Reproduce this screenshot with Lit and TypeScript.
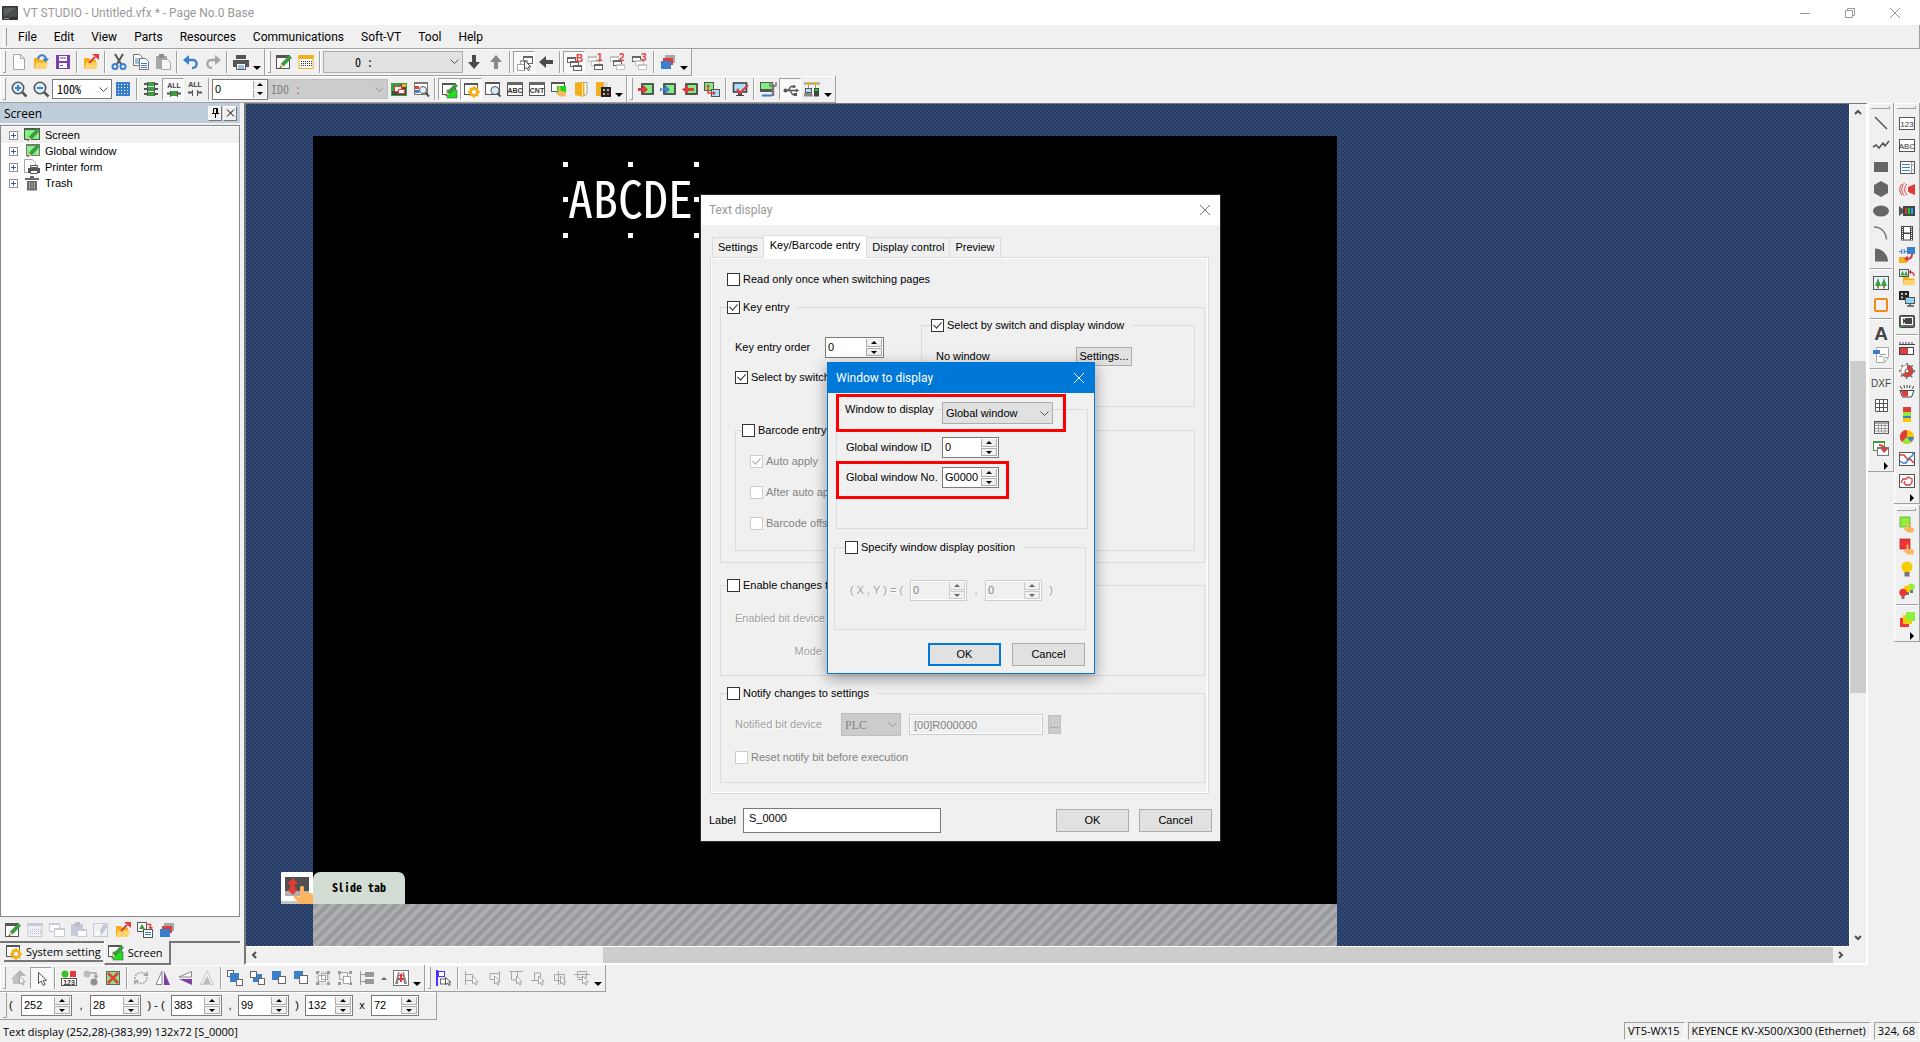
import { LitElement, html, svg, css, TemplateResult, SVGTemplateResult } from "lit";
import { customElement, property } from "lit/decorators.js";
import { classMap } from "lit/directives/class-map.js";
import { ifDefined } from "lit/directives/if-defined.js";

const GREEN = "#3f9b3f";
const RED = "#e03c3c";
const BLUE = "#3a7fcb";
const DARK = "#555";
const GREY = "#a6a6a6";
const YELLOW = "#f2b01e";

const pencil = svg`<path d="M13.200 1.200l2.800 2.600-8.400 8.600-2.800-2.700z" fill="${GREEN}"/><path d="M4.800 9.700l2.800 2.700-3.900 1.400z" fill="#e9c08c"/><path d="M4.200 12.200l1.200 1.100-2 .9z" fill="#222"/>`;
const hand = svg`<path d="M7.5 6.5c0-1.4 2-1.4 2 0v3.2l4 .8c1.3.3 1.5 1 1.4 2l-.5 3H8.6l-3.4-3c-.8-1 .3-1.900 1.200-1.400l1.100.6z" fill="#fdb562"/>`;
const folder = svg`<path d="M1 4h5l1.500 2H13v9H1z" fill="${YELLOW}"/><path d="M1 15l2.400-6.600H15L13 15z" fill="#ffd36b"/>`;
const cursor = svg`<path d="M7.500 5.500v9l2.200-2 1.500 3 1.500-.8-1.500-2.800h2.800z" fill="#fff" stroke="${DARK}"/>`;
const greyCursor = svg`<path d="M8.500 6v8l1.900-1.700 1.300 2.800 1.300-.7-1.300-2.500h2.500z" fill="#fff" stroke="${GREY}"/>`;
const windowBox = (x: number, y: number, w: number, h: number, c: string) =>
  svg`<rect x="${x + 0.5}" y="${y + 0.5}" width="${w - 1}" height="${h - 1}" fill="#fff" stroke="${c}"/><rect x="${x}" y="${y}" width="${w}" height="2" fill="${c}"/>`;
const stack = (n: string, a: string, b: string, c: string) =>
  svg`${windowBox(0, 2, 9, 6, a)}${windowBox(3, 6, 9, 6, b)}${windowBox(6, 10, 9, 6, c)}<text x="9" y="7" font-family="Liberation Sans" font-size="10" font-weight="700" fill="${RED}">${n}</text>`;
const framed = (t: string) =>
  svg`<rect x=".5" y="1.500" width="15" height="13" fill="#fff" stroke="${DARK}"/><rect x="0" y="1" width="16" height="3" fill="#666"/><text x="8" y="12" text-anchor="middle" class="it" font-size="7" font-weight="700" fill="#333">${t}</text>`;
const bordered = (t: string) =>
  svg`<rect x=".5" y="2.500" width="15" height="12" fill="#fff" stroke="${DARK}"/><text x="8" y="11.500" text-anchor="middle" class="it" font-size="8" fill="#333">${t}</text>`;
const monitor = svg`<rect x="3" y="2" width="13" height="12" rx="1" fill="${DARK}"/><rect x="5" y="4" width="9" height="8" fill="#7df07d"/>`;
const nodes = (c: string) =>
  svg`<g fill="${c}"><rect x="1" y="1" width="3" height="3"/><rect x="12" y="1" width="3" height="3"/><rect x="1" y="12" width="3" height="3"/><rect x="12" y="12" width="3" height="3"/></g>`;

const ICONS: Record<string, SVGTemplateResult> = {
  app: svg`<rect y="1" width="16" height="14" rx="1" fill="#333"/><rect x="1.500" y="2.500" width="13" height="9" fill="#5c605e"/><path d="M1.500 11.500l13-9v9z" fill="#4a4e4c"/><rect x="2" y="13" width="5" height="1" fill="#999"/>`,
  new: svg`<path d="M2.500.5h7l4 4v11h-11z" fill="#fff" stroke="${GREY}"/><path d="M9.500.5v4h4" fill="none" stroke="${GREY}"/>`,
  open: svg`${folder}<path d="M5 5c1-5 7-5 8 0" fill="none" stroke="${BLUE}" stroke-width="2"/><path d="M9.500 4.500h6.500l-3.200 4z" fill="${BLUE}"/>`,
  save: svg`<path d="M1 1h14v14H1z" fill="#7d3fa8"/><path d="M4 2h8v5H4zM4 9h8v5H4z" fill="#fff"/><path d="M5 4h6M5 11.500h3" stroke="#7d3fa8"/>`,
  export: svg`${folder}<path d="M6 9l6-6" stroke="${RED}" stroke-width="2"/><path d="M9 0h7v6z" fill="${RED}"/>`,
  cut: svg`<path d="M4 0l6 10M12 0L6 10" stroke="${DARK}" stroke-width="2"/><circle cx="4" cy="12.500" r="2.500" fill="none" stroke="${BLUE}" stroke-width="2"/><circle cx="12" cy="12.500" r="2.500" fill="none" stroke="${BLUE}" stroke-width="2"/>`,
  copy: svg`<path d="M.5.5h6l3 3v8h-9z" fill="#fff" stroke="#777"/><path d="M2 5h5M2 7h5M2 9h5" stroke="${BLUE}"/><path d="M6.500 4.500h6l3 3v8h-9z" fill="#fff" stroke="#777"/><path d="M8 9.500h6M8 11.500h6M8 13.500h6" stroke="${BLUE}"/>`,
  paste: svg`<path d="M1 2h11v13H1z" fill="${GREY}"/><rect x="4" width="5" height="4" fill="#8a8a8a"/><path d="M6.500 5.500h6l3 3v7h-9z" fill="#f6f6f6" stroke="${GREY}"/>`,
  undo: svg`<path d="M3 6h7c5 0 5 8-1 8" fill="none" stroke="${BLUE}" stroke-width="2.400"/><path d="M6 1v10L0 6z" fill="${BLUE}"/>`,
  redo: svg`<path d="M13 6H6c-5 0-5 8 1 8" fill="none" stroke="${GREY}" stroke-width="2.400"/><path d="M10 1v10l6-5z" fill="${GREY}"/>`,
  print: svg`<path d="M3 1h10v4H3z" fill="${DARK}"/><path d="M0 6h16v7H0z" fill="${DARK}"/><path d="M3.500 9.500h9v6h-9z" fill="#fff" stroke="${DARK}"/><path d="M5 12h6M5 14h6" stroke="${BLUE}"/>`,
  edit: svg`<rect x=".5" y="1.500" width="13" height="13" fill="#fff" stroke="${DARK}"/><rect y="1" width="14" height="3" fill="${DARK}"/>${pencil}`,
  calendar: svg`<rect x="1" y="1.500" width="14" height="13" fill="#fff" stroke="${YELLOW}"/><rect x=".5" y="1" width="15" height="4" fill="${YELLOW}"/><path d="M3 7.500h11M3 9.500h11M3 11.500h11" stroke="#333" stroke-dasharray="1 1"/>`,
  down: svg`<path d="M6 1h4v7h4l-6 7-6-7h4z" fill="#4a4a4a"/>`,
  up: svg`<path d="M6 15h4V8h4L8 1 2 8h4z" fill="#888"/>`,
  left: svg`<path d="M15 6v4H8v4L1 8l7-6v4z" fill="#4a4a4a"/>`,
  pickWindow: svg`${windowBox(6, 1, 10, 8, "#666")}${windowBox(3, 5, 8, 7, GREY)}<rect x="0.500" y="9.500" width="7" height="6" fill="#fff" stroke="${GREY}"/>${cursor}`,
  baseB: stack("B", "#666", "#666", "#666"),
  win1: stack("1", "#c4c4c4", "#c4c4c4", "#666"),
  win2: stack("2", "#c4c4c4", "#666", "#c4c4c4"),
  win3: stack("3", "#666", "#c4c4c4", "#c4c4c4"),
  layers: svg`<path d="M5 1h10v8H5z" fill="${GREY}"/><path d="M3 4h10v7H3z" fill="${RED}"/><path d="M1 7h10v8H1z" fill="${BLUE}"/>`,
  zoomIn: svg`<circle cx="7" cy="7" r="5.700" fill="#dff1ff" stroke="${DARK}" stroke-width="1.600"/><path d="M11 11l4.500 4.500" stroke="${DARK}" stroke-width="2.500"/><path d="M4 7h6M7 4v6" stroke="${BLUE}" stroke-width="2"/>`,
  zoomOut: svg`<circle cx="7" cy="7" r="5.700" fill="#dff1ff" stroke="${DARK}" stroke-width="1.600"/><path d="M11 11l4.500 4.500" stroke="${DARK}" stroke-width="2.500"/><path d="M4 7h6" stroke="${BLUE}" stroke-width="2"/>`,
  grid: svg`<rect x="1" y="1" width="14" height="14" fill="${BLUE}"/><path d="M3 3.500h11M3 6.500h11M3 9.500h11M3 12.500h11" stroke="#fff" stroke-dasharray="1 2"/>`,
  devices: svg`<path d="M5 1h6v4H5zM5 6h6v4H5zM5 11h6v4H5z" fill="${GREEN}"/><path d="M1 3h3M12 3h3M1 8h3M12 8h3M1 13h3M12 13h3" stroke="${DARK}" stroke-width="2"/><path d="M4.500 1v14M11.500 1v14" stroke="${DARK}"/>`,
  allOn: svg`<text x="8" y="6" text-anchor="middle" font-family="Liberation Sans" font-size="7" font-weight="700" fill="#444">ALL</text><rect x="5" y="9" width="6" height="5" fill="${GREEN}"/><path d="M1 11.500h3M12 11.500h3" stroke="${DARK}" stroke-width="2"/><path d="M4.500 9v6M11.500 9v6" stroke="${DARK}"/>`,
  allOff: svg`<text x="8" y="6" text-anchor="middle" font-family="Liberation Sans" font-size="7" font-weight="700" fill="#444">ALL</text><path d="M1 11.500h4M11 11.500h4" stroke="${DARK}" stroke-width="2"/><path d="M5.500 9v6M10.500 9v6" stroke="${DARK}"/>`,
  windows: svg`<rect x=".5" y="2.500" width="15" height="12" fill="#444" stroke="${GREEN}"/><path d="M1 3h9v7H1z" fill="${GREEN}"/><rect x="3.500" y="5.500" width="7" height="5" fill="#fff" stroke="${RED}"/><rect x="7.500" y="8.500" width="6" height="4" fill="#fff" stroke="${RED}"/><path d="M11 3h4v3h-4z" fill="${YELLOW}"/>`,
  searchWin: svg`${windowBox(1, 1, 14, 13, "#777")}<rect x="2" y="5" width="4" height="3" fill="${RED}"/><rect x="2" y="9" width="4" height="3" fill="${BLUE}"/><circle cx="10" cy="9" r="3.500" fill="#e8f4ff" stroke="${DARK}"/><path d="M12.500 11.500L16 15.500" stroke="${DARK}" stroke-width="2"/>`,
  screenEdit: svg`${windowBox(0, 1, 14, 12, DARK)}<rect x="5" y="8" width="10" height="8" fill="#1fe01f" stroke="${DARK}" stroke-width=".6"/>${pencil}`,
  screenGear: svg`${windowBox(0, 1, 14, 12, DARK)}<circle cx="10" cy="10" r="3.600" fill="none" stroke="${YELLOW}" stroke-width="3"/><path d="M10 4v12M4 10h12M5.800 5.800l8.400 8.400M14.200 5.800l-8.400 8.400" stroke="${YELLOW}" stroke-width="1.600"/><circle cx="10" cy="10" r="2" fill="#fff"/>`,
  screenFind: svg`${windowBox(0, 1, 15, 13, DARK)}<circle cx="10" cy="9.500" r="4" fill="#d5ecfb" stroke="${DARK}"/><path d="M12.500 12.500l3 3" stroke="${DARK}" stroke-width="2"/>`,
  abcWin: framed("ABC"),
  cntWin: framed("CNT"),
  screenTouch: svg`${windowBox(0, 1, 14, 10, DARK)}<rect x="6" y="5" width="9" height="8" fill="#16d916"/>${hand}`,
  books: svg`<path d="M9.500 1.500H14v11.500l-3 2z" fill="#fff" stroke="#888" stroke-width=".8"/><path d="M2 1.500L9.500 1l2 1.500V14l-2 2L2 14z" fill="${YELLOW}"/><path d="M9.500 2v13" stroke="#fff3d0" stroke-width=".8"/>`,
  bookGrid: svg`<path d="M1 1h8v14H1z" fill="${YELLOW}"/><path d="M9 1h4v5H9z" fill="#ddd"/><rect x="6" y="6" width="10" height="10" fill="#222"/><path d="M8 8h2v2H8zM12 8h2v2h-2zM8 12h2v2H8z" fill="#bbb"/><path d="M12 12h2v2h-2z" fill="${RED}"/>`,
  toPanel: svg`${monitor}<path d="M0 7h5V4l5 4.500L5 13v-3H0z" fill="${RED}"/>`,
  toPanelBlue: svg`${monitor}<path d="M3 7h2V4l5 4.500L5 13v-3H3z" fill="${BLUE}"/><path d="M.5 7v3M2 7v3" stroke="${BLUE}"/>`,
  fromPanel: svg`${monitor}<path d="M12 7H6V4L0 8.500 6 13v-3h6z" fill="${RED}"/>`,
  compare: svg`<rect x=".5" y="1.500" width="9" height="8" fill="#7df07d" stroke="${DARK}"/><rect x="7.500" y="8.500" width="8" height="7" fill="#a9e0fb" stroke="${DARK}"/><path d="M4 5v7h6" fill="none" stroke="${RED}" stroke-width="1.500"/><path d="M2 6l2-3 2 3zM9 10l3 2-3 2.500z" fill="${RED}"/>`,
  verify: svg`<rect x="1.500" y="2" width="13" height="9" fill="#a9e0fb" stroke="#444" stroke-width="1.600"/><path d="M6 12h4v2h2v1H4v-1h2z" fill="#444"/><path d="M5 8l3 4 8-8" fill="none" stroke="${RED}" stroke-width="2.200"/>`,
  panelTool: svg`<rect x=".5" y="1.500" width="12" height="9" fill="#7df07d" stroke="${DARK}"/><path d="M0 8h13v3H0z" fill="${DARK}"/><path d="M13 3v12" stroke="#777" stroke-width="2.500"/><path d="M10 1v4h6V1" fill="none" stroke="#777" stroke-width="1.500"/><path d="M2 14.500h10" stroke="${BLUE}" stroke-width="2"/>`,
  usb: svg`<path d="M2 8.500h12M5 8.500l3-4h3M7 8.500l2.500 4H12" fill="none" stroke="${DARK}" stroke-width="1.300"/><circle cx="2.500" cy="8.500" r="2" fill="${DARK}"/><path d="M13 6.500l3 2-3 2z" fill="${DARK}"/><circle cx="11" cy="4.500" r="1.500" fill="${DARK}"/><rect x="11" y="11" width="3" height="3" fill="${DARK}"/>`,
  network: svg`<path d="M0 2.500h16" stroke="#999" stroke-width="2"/><path d="M4.500 3v5M11.500 3v4" stroke="#999"/><path d="M3 1h3v3H3zM10 1h3v3h-3z" fill="${YELLOW}"/><rect x="1.500" y="7.500" width="6" height="4" fill="#a9e0fb" stroke="${DARK}"/><path d="M0 12h8l1 3.500H0z" fill="#888"/><rect x="10" y="7" width="5" height="8.500" fill="#444"/><rect x="11" y="8" width="3" height="2" fill="#16d916"/>`,
  treeScreen: svg`<rect x=".5" y="1.500" width="15" height="11" fill="#7df07d" stroke="#555"/><rect y="1" width="16" height="2" fill="#555"/>${pencil}`,
  treeGlobal: svg`<rect x="2.500" y="1.500" width="13" height="11" fill="#8af28a" stroke="#777"/><rect x="2" y="1" width="14" height="2" fill="#777"/>${pencil}`,
  treePrinter: svg`<path d="M.5.5h8l3 3v10h-11z" fill="#fff" stroke="${GREY}"/><path d="M4 9h12v5H4z" fill="${DARK}"/><path d="M6.500 6.500h7v2h-7zM6.500 11.500h7v3h-7z" fill="#fff" stroke="${DARK}"/>`,
  trash: svg`<path d="M6 1h4v2h5v2H1V3h5z" fill="#6a6a6a"/><path d="M3 6h10v9.500H3z" fill="#6a6a6a"/><path d="M5.500 7v7M8 7v7M10.500 7v7" stroke="#a5a5a5"/>`,
  calGrey: svg`<rect x="1" y="1.500" width="14" height="13" fill="#f0f2f8" stroke="#c6cad8"/><rect x=".5" y="1" width="15" height="3" fill="#c6cad8"/><path d="M3 7.500h11M3 9.500h11M3 11.500h11" stroke="#b4b8c8" stroke-dasharray="1 1"/>`,
  copyGrey: svg`<g>${windowBox(0, 1, 11, 9, "#c6cad8")}${windowBox(5, 6, 11, 9, "#c6cad8")}</g>`,
  pasteGrey: svg`<path d="M0 2h12v12H0z" fill="#c6cad8"/><rect x="4" width="5" height="4" fill="#b8bccb"/>${windowBox(6, 7, 10, 8, "#c6cad8")}`,
  eraseGrey: svg`<rect x=".5" y="1.500" width="14" height="13" fill="#eef0f6" stroke="#c6cad8"/><path d="M11 1l4 3-6 8-5 2z" fill="#c6cad8"/><path d="M2 12l3-4 3 3-3 3z" fill="#fff"/>`,
  replace: svg`<rect x=".5" y=".5" width="9" height="9" fill="#fff" stroke="${DARK}"/><path d="M5 2l3 5H2z" fill="${GREEN}"/><rect x="6.500" y="7.500" width="9" height="8" fill="#fff" stroke="${DARK}"/><path d="M8 10.500h6M8 12.500h6" stroke="${BLUE}"/><path d="M9 2.500h4.500V6" fill="none" stroke="${RED}" stroke-width="1.500"/><path d="M11.500 5h4.500l-2.200 3z" fill="${RED}"/>`,
  selParts: svg`<path d="M9 0l6 6H3z" fill="#b4b4b4"/><path d="M4 5l-4 4 2 .5V14h6V5z" fill="#c0c0c0"/>${greyCursor}`,
  cursor: svg`<path d="M4.500 1.500v11l2.700-2.500 2 4.500 2-1-2-4.200h3.500z" fill="#fff" stroke="${DARK}"/>`,
  parts123: svg`<circle cx="4" cy="4" r="3.500" fill="#3fbf2f"/><rect x="9" y="1" width="6" height="6" fill="${RED}"/><rect x=".5" y="8.500" width="15" height="7" fill="#fff" stroke="${DARK}"/><text x="8" y="14.500" text-anchor="middle" class="it" font-size="7" font-weight="700" fill="#333">123</text>`,
  moveParts: svg`<circle cx="4" cy="4" r="3.500" fill="#bdbdbd"/><circle cx="11" cy="12" r="3.500" fill="#8f8f8f"/><path d="M7 3h6v3" fill="none" stroke="${GREY}" stroke-width="1.500"/><path d="M10.500 5.500h5L13 9z" fill="#999"/>`,
  noFill: svg`<rect x="1.500" y="1.500" width="13" height="13" fill="#8ee27a" stroke="#666"/><path d="M3 3l10 10M13 3L3 13" stroke="${RED}" stroke-width="2.500"/>`,
  rotate: svg`<path d="M2 9a6 6 0 0 1 10-5" fill="none" stroke="${GREY}" stroke-width="1.500" stroke-dasharray="2 1"/><path d="M14 7a6 6 0 0 1-10 5" fill="none" stroke="${GREY}" stroke-width="1.500" stroke-dasharray="2 1"/><path d="M10 6h5V1zM6 10H1v5z" fill="${GREY}"/>`,
  flipH: svg`<path d="M7 1v13.500H1z" fill="#fff" stroke="#888"/><path d="M9 1v14h6z" fill="#7d3fa8"/>`,
  flipV: svg`<path d="M14.500 1.500v5.500H2z" fill="#fff" stroke="#888"/><path d="M15 9v6L2 9z" fill="#7d3fa8"/>`,
  shear: svg`<path d="M8 1L1.500 14.500h13z" fill="none" stroke="${GREY}" stroke-dasharray="1 1"/><path d="M8 6v8H4zM8 6v8h4z" fill="#bbb"/>`,
  toFront: svg`<rect x=".5" y=".5" width="6" height="6" fill="#fff" stroke="#666"/><rect x="3" y="3" width="9" height="9" fill="${BLUE}"/><rect x="9.500" y="9.500" width="6" height="6" fill="#fff" stroke="#666"/>`,
  forward: svg`<rect x="4" y="4" width="9" height="8" fill="${BLUE}"/><rect x="1.500" y="1.500" width="6" height="6" fill="#fff" stroke="#666"/><rect x="9.500" y="8.500" width="6" height="6" fill="#fff" stroke="#666"/>`,
  backward: svg`<rect x="1" y="1" width="9" height="9" fill="${BLUE}"/><rect x="7.500" y="6.500" width="7" height="7" fill="#fff" stroke="#666"/>`,
  toBack: svg`<rect x="1" y="1" width="9" height="8" fill="${BLUE}"/><rect x="6.500" y="5.500" width="8" height="8" fill="#fff" stroke="#666"/>`,
  group: svg`${nodes("#999")}<rect x="3.500" y="5.500" width="7" height="6" fill="#fff" stroke="${GREY}"/><rect x="6.500" y="3.500" width="6" height="6" fill="none" stroke="${GREY}"/><path d="M2 4v8M14 4v8M4 2h8M4 14h8" stroke="${GREY}" stroke-dasharray="1 1"/>`,
  ungroup: svg`${nodes("#999")}<rect x="2.500" y="2.500" width="8" height="7" fill="none" stroke="${GREY}"/><rect x="6.500" y="6.500" width="7" height="7" fill="#fff" stroke="${GREY}"/>`,
  alignLeft: svg`<path d="M1.500 1v14" stroke="#999"/><path d="M6 2h9v5H6zM6 9h9v5H6z" fill="#999"/><path d="M2 4.500h4M2 11.500h4" stroke="#999"/>`,
  textColor: svg`<rect x=".5" y=".5" width="15" height="15" fill="#fff" stroke="#777"/><path d="M2 14l3-12h1.500L5 14zM14 14L11 2H9.500L11 14z" fill="#888"/><path d="M8 3l2.500 3H9v2h2v2H9v2H7v-2H5V8h2V6H5.500z" fill="${RED}"/>`,
  snap: svg`<path d="M1 0v16" stroke="#4a32ff" stroke-width="2"/><rect x="2.500" y="1.500" width="6" height="5" fill="#fff" stroke="#4a32ff"/><rect x="4.500" y="9" width="6" height="5" fill="#fff" stroke="#666"/><path d="M9.500 7.500v7l2-1.500 1.500 2.500 1.300-.8-1.500-2.500H15z" fill="#fff" stroke="${DARK}"/>`,
  al1: svg`<path d="M1.500 1v14M2 4.500h7v6H2" fill="none" stroke="${GREY}"/>${greyCursor}`,
  al2: svg`<path d="M13.500 1v10M13 3.500H4v6h5" fill="none" stroke="${GREY}"/>${greyCursor}`,
  al3: svg`<path d="M1 1.500h14M3.500 2v8h6V2" fill="none" stroke="${GREY}"/>${greyCursor}`,
  al4: svg`<path d="M1 10.500h13M4.500 10V3h6v5" fill="none" stroke="${GREY}"/>${greyCursor}`,
  al5: svg`<path d="M6.500 1v14M2.500 4.500h10v6h-10z" fill="none" stroke="${GREY}"/>${greyCursor}`,
  al6: svg`<path d="M0 4.500h16M3.500 1.500h9v6h-9zM3.500 9.500h6" fill="none" stroke="${GREY}"/>${greyCursor}`,
  line: svg`<path d="M2 2l12 12" stroke="${DARK}" stroke-width="1.500"/>`,
  polyline: svg`<path d="M0 10l3-2 3 3 4-5 2 3 4-5" fill="none" stroke="${DARK}" stroke-width="1.600"/>`,
  rect: svg`<rect x="1" y="3" width="14" height="10" fill="#666"/>`,
  hexagon: svg`<path d="M8 0l7 4v8l-7 4-7-4V4z" fill="#666"/>`,
  ellipse: svg`<ellipse cx="8" cy="8" rx="8" ry="5.500" fill="#666"/>`,
  arc: svg`<path d="M1 2c7 0 12 5 12.500 12.500" fill="none" stroke="#777" stroke-width="1.500"/>`,
  pie: svg`<path d="M2 1.500c7 0 13 6 13 13H2z" fill="#666"/>`,
  image: svg`<rect x=".5" y="1.500" width="15" height="13" fill="#e6f6ff" stroke="${DARK}"/><path d="M5 3l3 8H2zM11 3l3 8H8z" fill="${GREEN}"/><path d="M5 11v2.500M11 11v2.500" stroke="#9a5a1e" stroke-width="1.500"/>`,
  frame: svg`<rect x="2" y="2" width="12" height="12" rx="1" fill="none" stroke="#f08a1a" stroke-width="2"/>`,
  letterA: svg`<text x="8" y="15" text-anchor="middle" font-family="Liberation Sans" font-size="19" font-weight="700" fill="#444">A</text>`,
  note: svg`<path d="M3.500.5h12v10l-4 5h-8z" fill="#fff" stroke="#aaa"/><path d="M15 10.500h-4V15" fill="none" stroke="#aaa"/><path d="M7 7.500h6M6 9.500h4" stroke="#999"/><rect y="3" width="7" height="4" fill="${BLUE}"/>`,
  dxf: svg`<text x="8" y="12" text-anchor="middle" class="it" font-size="10" fill="#444">DXF</text>`,
  table1: svg`<path d="M2.500 2.500h12v12h-12zM2 6.500h13M2 10.500h13M6.500 2v13M10.500 2v13" fill="#fff" stroke="${DARK}"/>`,
  table2: svg`<rect x="1.500" y="2.500" width="14" height="12" fill="#fff" stroke="${DARK}"/><rect x="2" y="3" width="13" height="2" fill="#aaa"/><path d="M2 6.500h13M2 9.500h13M2 12h13M5.500 3v12M8.500 3v12M12 3v12" stroke="#999"/>`,
  inlay: svg`<rect x=".5" y=".5" width="11" height="9" fill="#fff" stroke="${GREEN}"/><rect y="0" width="12" height="2" fill="${GREEN}"/>${windowBox(4, 6, 12, 9, "#777")}<path d="M6 4c4 0 5 2 5 5" fill="none" stroke="${RED}" stroke-width="2"/><path d="M8 8h7l-4 4z" fill="${RED}"/>`,
  num: bordered("123"),
  abc: bordered("ABC"),
  list: svg`<rect x="1.500" y="2.500" width="14" height="12" fill="#fff" stroke="${DARK}"/><path d="M3 5.500h8M3 8.500h8M3 11.500h8" stroke="${BLUE}"/><path d="M12.500 3v11M12.500 6h3M12.500 11h3" stroke="#999"/>`,
  sound: svg`<path d="M9 6l7-3v11l-7-3z" fill="${RED}"/><path d="M8 3c-3 3-3 8 0 11M5.500 2C2 5 2 12 5.500 15M3 3c-3 3-3 8 0 11" fill="none" stroke="${RED}"/>`,
  camera: svg`<path d="M0 3l4 3v4l-4 3z" fill="${DARK}"/><rect x="4" y="3" width="12" height="10" fill="#444"/><rect x="6" y="5" width="2" height="6" fill="${RED}"/><rect x="9" y="5" width="2" height="6" fill="#16d916"/><rect x="12" y="5" width="2" height="6" fill="#29a3ff"/>`,
  film: svg`<rect x="2" y="1" width="12" height="14.500" fill="#444"/><path d="M5 2h6v5.500H5zM5 9h6v5.500H5z" fill="#fff"/><path d="M3.500 2v13M12.500 2v13" stroke="#fff" stroke-dasharray="1 1"/>`,
  convert: svg`<rect x="8" y="0" width="8" height="7" fill="${BLUE}"/><path d="M0 4.500h3M5 4.500h3M2.800 2v5M5.200 2v5" stroke="${BLUE}"/><rect y="10" width="8" height="6" fill="${YELLOW}"/><path d="M13 7c0 4-2 5-5 5" fill="none" stroke="${RED}" stroke-width="2"/><path d="M9 8.500v6.500l-4-3.200z" fill="${RED}"/>`,
  imageFolder: svg`<rect x=".5" y=".5" width="9" height="7" fill="#e6f6ff" stroke="${DARK}"/><path d="M3.500 1.500l2 5h-4zM7 1.500l2 5H5z" fill="${GREEN}"/><path d="M4 8h5l1 1.500h5.500V16H4z" fill="${YELLOW}"/><path d="M5 11h11l-1 5H4z" fill="#ffd36b"/><path d="M15 7c0-3-1-4-4-4" fill="none" stroke="${RED}" stroke-width="1.500"/><path d="M12 .5v5L9.500 3z" fill="${RED}"/>`,
  remote: svg`<rect x="0" y="0" width="10" height="9" fill="#222"/><path d="M2 2h2v2H2zM6 2h2v2H6zM2 5.500h2v2H2z" fill="#ccc"/><rect x="6.500" y="6.500" width="9" height="6" fill="#8fd8fb" stroke="${DARK}"/><path d="M8 15h7M11 13v2" stroke="${DARK}" stroke-width="1.500"/>`,
  video: svg`<rect x=".5" y="2.500" width="15" height="12" rx="1" fill="#666" stroke="#444"/><rect x="2" y="4" width="12" height="8" fill="#fff"/><path d="M4 5l2 2v2l-2 2z" fill="#444"/><rect x="6" y="5" width="7" height="6" fill="#444"/><path d="M2 13.500h2" stroke="#16d916"/>`,
  barMeter: svg`<path d="M1 1v3M4 1v3M7 1v3M10 1v3M13 1v3M0 3.500h16" stroke="#444"/><rect x=".5" y="6.500" width="14" height="7" fill="#fff" stroke="#444"/><rect x="1" y="7" width="8" height="6" fill="${RED}"/>`,
  gauge: svg`<circle cx="8" cy="8" r="7.200" fill="none" stroke="#555" stroke-width="1.500" stroke-dasharray="1.500 4"/><circle cx="8" cy="8" r="6" fill="${RED}" stroke="#555" stroke-width=".8"/><path d="M8 8V2a6 6 0 0 0-5 9z" fill="#fff"/><circle cx="8" cy="8" r="2" fill="#fff" stroke="#555"/>`,
  halfGauge: svg`<path d="M1 1l2 3M5 0l.5 3M8 0v3M11 0l-.5 3M15 1l-2 3" stroke="#444"/><path d="M1 5.500h14L12.500 12h-9z" fill="#fff" stroke="#444"/><path d="M2 6h7v5.500H4z" fill="${RED}"/>`,
  stacked: svg`<rect x="4" y="0" width="8" height="5" fill="${RED}"/><rect x="4" y="5" width="8" height="4" fill="#8fe83a"/><rect x="4" y="9" width="8" height="2" fill="${BLUE}"/><rect x="4" y="11" width="8" height="4" fill="#f7c600"/>`,
  piechart: svg`<circle cx="8" cy="8" r="7" fill="#f7c600"/><path d="M8 8V1a7 7 0 0 0-5 12z" fill="${RED}"/><path d="M8 8l-5 5a7 7 0 0 0 9 0z" fill="#8fe83a"/><path d="M8 8h7a7 7 0 0 1-3 5z" fill="${BLUE}"/>`,
  trend: svg`<rect x=".5" y="1.500" width="15" height="13" fill="#fff" stroke="${DARK}"/><path d="M1 4l4 0 4 5 2-1 4 4" fill="none" stroke="${RED}" stroke-width="1.500"/><path d="M1 10l3 2h3l3-5 3-2 2-4" fill="none" stroke="${BLUE}" stroke-width="1.500"/>`,
  scatter: svg`<rect x=".5" y="1.500" width="15" height="13" fill="#fff" stroke="${DARK}"/><path d="M2 10l2-4 3 0 2-2 4 2 0 3-2 3-4 0-2-2 1-2" fill="none" stroke="${RED}" stroke-width="1.300"/>`,
  swGreen: svg`<rect x="1" y="0" width="10" height="10" fill="#8cf03c" stroke="#4b8f1b" stroke-width=".6"/>${hand}`,
  swRed: svg`<rect x="1" y="0" width="10" height="10" fill="#f23434" stroke="#951d1d" stroke-width=".6"/>${hand}`,
  lamp: svg`<circle cx="8" cy="6" r="5.500" fill="#f7cc00"/><rect x="5.500" y="11" width="5" height="4.500" fill="#777"/>`,
  lamps: svg`<circle cx="12.500" cy="4" r="3.300" fill="#8cf03c"/><rect x="11" y="7" width="3" height="3" fill="#777"/><circle cx="8" cy="6" r="3.500" fill="#f7cc00"/><rect x="7" y="9" width="3" height="3" fill="#777"/><circle cx="4" cy="9.500" r="3.700" fill="#f23434"/><rect x="2.500" y="13" width="3" height="3" fill="#777"/>`,
  overlay: svg`<rect x="1" y="7" width="9" height="9" fill="#f23434"/><rect x="4" y="4" width="9" height="9" fill="#f7cc00"/><rect x="7" y="1" width="9" height="9" fill="#8cf03c"/>`,
};

const icon = (name: string) => html`<svg class="icon" viewBox="0 0 16 16" aria-hidden="true">${ICONS[name]}</svg>`;

type Item = string | TemplateResult;

const shared = css`
  * { box-sizing: border-box; }
  button, input, select { font: inherit; color: inherit; margin: 0; border-radius: 0; outline: none; }
  button { padding: 0; }
  .icon { width: 16px; height: 16px; display: block; flex: none; overflow: visible; }
  .it { font-family: "Liberation Sans Narrow", "Liberation Sans", sans-serif; }
  .spin { display: flex; flex: none; width: 57px; height: 21px; border: 1px solid #7a7a7a; background: #fff; padding: 1px; font: 11px "Liberation Sans", sans-serif; }
  .spin input { flex: 1; min-width: 0; width: 0; border: 0; background: none; padding: 0 0 1px 1px; }
  .spin .arrows { display: grid; grid-template-rows: 1fr 1fr; gap: 1px; width: 16px; }
  .spin button { border: 1px solid #adadad; background: #f0f0f0; display: grid; place-items: center; min-height: 0; }
  .spin .up { border-top: 0; }
  .spin button::after { content: ""; border: 3px solid transparent; }
  .spin .up::after { border-bottom-color: #000; border-top: 0; }
  .spin .down::after { border-top-color: #000; border-bottom: 0; }
  .spin.off { border-color: #ccc; background: #f0f0f0; color: #838383; box-shadow: inset 0 0 0 1px #fff; }
  .spin.off button { border-color: #ccc; }
  .spin.off .up::after { border-bottom-color: #666; }
  .spin.off .down::after { border-top-color: #666; }
`;

/* A number field with up and down buttons. Pass an id when a visible label names it, a name otherwise. */
const spin = (value: string, opts: { id?: string; name?: string; cls?: string; off?: boolean } = {}) => html`
  <span class="spin ${opts.cls ?? ""} ${opts.off ? "off" : ""}"
    ><input type="text" id=${ifDefined(opts.id)} aria-label=${ifDefined(opts.name)} .value=${value} ?disabled=${opts.off} /><span class="arrows"
      ><button class="up" aria-label="Increase" ?disabled=${opts.off}></button
      ><button class="down" aria-label="Decrease" ?disabled=${opts.off}></button></span
  ></span>`;

const chevron = svg`<path d="M.5 .5l4 4 4-4"/>`;
const combo = (cls: string, label: string, text: string, disabled = false) => html`
  <span class="combo ${cls}"
    ><select aria-label=${label} ?disabled=${disabled}><option>${text}</option></select
    ><svg viewBox="0 0 9 6" aria-hidden="true">${chevron}</svg></span
  >`;

@customElement("tool-strip")
export class ToolStrip extends LitElement {
  @property({ attribute: false }) items: Item[] = [];
  @property({ type: Boolean, reflect: true }) vertical = false;

  static styles = [
    shared,
    css`
      :host {
        display: flex;
        align-items: center;
        border: solid #a0a0a0;
        border-width: 0 1px 1px 0;
        box-shadow: inset 1px 1px #fff;
        font-size: 12px;
      }
      :host([vertical]) { flex-direction: column; }
      .grip { width: 3px; margin: 2px 2px 2px 3px; align-self: stretch; border: solid #a0a0a0; border-width: 0 1px 1px 0; box-shadow: inset 1px 0 #fff; }
      :host([vertical]) .grip { width: auto; height: 3px; margin: 3px 3px 3px; }
      .tool { width: 22px; height: 22px; padding: 3px; border: 0; background: none; display: grid; place-items: center; flex: none; }
      .tool.on { background: #f9f9f9; border: 1px solid; border-color: #a0a0a0 #fff #fff #a0a0a0; }
      .sep { width: 2px; height: 22px; margin: 0 2px; border-left: 1px solid #a0a0a0; border-right: 1px solid #fff; }
      :host([vertical]) .sep { width: 22px; height: 2px; margin: 2px 0; border: solid; border-width: 1px 0; border-color: #a0a0a0 transparent #fff; }
      .more { width: 12px; height: 22px; border: 0; background: none; display: grid; place-items: end center; padding: 0 2px 3px 0; }
      .more::after { content: ""; border: 4px solid transparent; border-top-color: #000; border-bottom: 0; }
      .small { width: 12px; height: 22px; border: 0; background: none; display: grid; place-items: center; }
      .small::after { content: ""; border: 3px solid transparent; border-bottom-color: #666; border-top: 0; }
      :host([vertical]) .more { width: 22px; height: 11px; place-items: center end; padding: 0 4px 0 0; }
      :host([vertical]) .more::after { border: 4px solid transparent; border-left-color: #000; border-right: 0; }
      .combo { height: 22px; position: relative; display: flex; }
      .combo select { appearance: none; width: 100%; background: #e1e1e1; border: 1px solid #adadad; font: 12px "Noto Sans Mono CJK JP", "Liberation Mono", monospace; padding: 0 0 2px 4px; }
      .combo svg { position: absolute; right: 4px; top: 8px; width: 9px; height: 6px; fill: none; stroke: #555; pointer-events: none; }
      .page { width: 140px; }
      .page select { padding-left: 31px; }
      .zoom { width: 60px; height: 20px; }
      .zoom select { background: #fff; border-color: #7a7a7a; }
      .ident { width: 120px; height: 20px; }
      .ident select { background: #ccc; border-color: #bfbfbf; color: #838383; opacity: 1; padding-left: 2px; }
      .ident svg { stroke: #999; }
      .spin { width: 56px; }
      .spin .arrows { width: 13px; }
      .spin button { border-width: 0 0 0 1px; }
    `,
  ];

  render() {
    return html`<span class="grip"></span>${this.items.map((item) => {
        if (typeof item !== "string") return item;
        if (item === "|") return html`<span class="sep"></span>`;
        if (item === ">") return html`<button class="more" aria-label="More"></button>`;
        if (item === "^") return html`<button class="small" aria-label="Options"></button>`;
        const on = item.startsWith("*");
        const name = on ? item.slice(1) : item;
        return html`<button class=${classMap({ tool: true, on })} aria-label=${name}>${icon(name)}</button>`;
      })}`;
  }
}

@customElement("app-root")
export class AppRoot extends LitElement {
  static styles = [
    shared,
    css`
      :host {
        --ui: Roboto, "Open Sans", sans-serif;
        --compact: "Open Sans", "Noto Sans", sans-serif;
        --sans: "Liberation Sans", Arial, sans-serif;
        --mono: "Noto Sans Mono CJK JP", "Liberation Sans Narrow", "Liberation Mono", monospace;
        display: flex;
        flex-direction: column;
        position: relative;
        height: 100vh;
        overflow: hidden;
        background: #f0f0f0;
        color: #000;
        font: 11px/15px var(--sans);
      }
      .title { display: flex; align-items: center; height: 25px; flex: none; background: #fff; padding: 0 17px 0 2px; gap: 5px; font: 12px var(--ui); color: #999; }
      .title h1 { font: inherit; margin: 0; flex: 1; }
      .wbtn { border: 0; background: none; width: 16px; height: 16px; margin-left: 24px; }
      .wbtn svg { fill: none; stroke: #999; }
      .menu { display: flex; align-items: center; height: 24px; flex: none; border-bottom: 1px solid #a0a0a0; border-right: 1px solid #a0a0a0; padding-left: 3px; font: 12px var(--ui); }
      .menu::before { content: ""; width: 2px; height: 18px; border-right: 1px solid #a0a0a0; border-left: 1px solid #fff; margin-right: 2px; }
      .menu button { border: 0; background: none; padding: 0 8px 0 9px; }
      .bars { display: flex; flex: none; height: 27px; }

      .main { flex: 1; display: flex; min-height: 0; }
      .side { width: 240px; flex: none; display: flex; flex-direction: column; margin-right: 4px; font: 11px var(--compact); }
      .side header { display: flex; align-items: center; height: 20px; background: #bfcddb; padding: 0 3px 0 4px; gap: 1px; }
      .side h2 { font: inherit; font-size: 12px; margin: 0; flex: 1; }
      .pbtn { width: 14px; height: 15px; background: #f0f0f0; border: 1px solid; border-color: #fff #777 #777 #fff; display: grid; place-items: center; }
      .pbtn svg { width: 9px; height: 10px; fill: none; stroke: #000; }
      .tree { flex: 1; margin: 2px 0 0; padding: 1px 0; list-style: none; border: 1px solid #828790; background: #fff; font: 11px var(--sans); }
      .tree li { display: flex; align-items: center; height: 16px; padding-left: 8px; }
      .tree li.sel { background: #f0f0f0; }
      .tree .icon { margin: 0 5px 0 6px; }
      .exp { width: 9px; height: 9px; border: 1px solid #919191; background: linear-gradient(#3a55a5, #3a55a5) center / 5px 1px no-repeat, linear-gradient(#3a55a5, #3a55a5) center / 1px 5px no-repeat, #fff; }
      .quick { display: flex; height: 26px; align-items: center; padding: 2px 0 0 2px; border-bottom: 2px solid #777; }
      .quick button { border: 0; background: none; width: 22px; height: 22px; display: grid; place-items: center; }
      .tabs { display: flex; height: 22px; align-items: flex-start; padding-left: 4px; }
      .tabs button { display: flex; align-items: center; gap: 4px; background: none; white-space: nowrap; height: 19px; padding: 0 2px; border: solid #777; border-width: 0 0 2px; }
      .tabs .cur { padding: 0 6px 0 3px; margin: -2px 0 0 1px; height: 24px; background: #f0f0f0; border-width: 0 2px 2px 0; border-left: 1px solid #fff; }

      .frame { flex: 1; min-width: 0; display: grid; grid-template: 1fr 17px / 1fr 17px; border: solid; border-width: 1px 2px 2px 2px; border-color: #777 #fff #fff #777; }
      .view { overflow: hidden; padding: 32px 0 0 67px; background: conic-gradient(#23376b 25%, #364c6c 0 50%, #23376b 0 75%, #364c6c 0) 0 0 / 4px 4px; }
      .sheet { width: 1024px; height: 810px; background: repeating-linear-gradient(135deg, #9a9b9e 0 4px, #adaeb1 4px 8px); }
      .page { position: relative; height: 768px; background: #000; }
      .big { position: absolute; left: 255px; top: 27px; color: #fff; font: 50px/66px var(--mono); white-space: nowrap; }
      .h { position: absolute; width: 5px; height: 5px; background: #fff; }
      .slide { position: absolute; left: 0; bottom: 0; width: 92px; height: 32px; border-radius: 7px 7px 0 0; background: #d3ddd3; color: #000; font: 700 12px/30px var(--mono); text-align: center; }
      .tabicon { position: absolute; left: -32px; bottom: 0; width: 32px; height: 32px; display: block; }
      .vbar, .hbar { display: flex; background: #f0f0f0; }
      .vbar { flex-direction: column; border-left: 1px solid #fff; }
      .hbar { border-top: 1px solid #fff; }
      .bar-btn { width: 16px; height: 16px; flex: none; display: grid; place-items: center; border: 0; background: none; }
      .bar-btn svg { width: 8px; height: 8px; fill: none; stroke: #505050; stroke-width: 2; }
      .thumb { background: #cdcdcd; }
      .v1 { flex: 240; } .v2 { flex: 332; } .v3 { flex: 236; }
      .h1 { flex: 341; } .h2 { flex: 1228; }
      .rail { width: 26px; flex: none; display: flex; flex-direction: column; gap: 1px; }

      .coords { display: flex; flex: none; height: 28px; }
      .coords > div { display: flex; align-items: center; border: solid #a0a0a0; border-width: 0 1px 1px 0; box-shadow: inset 0 1px #fff; padding: 0 17px 0 3px; }
      .coords > div::before { content: ""; width: 3px; height: 24px; border: solid #a0a0a0; border-width: 0 1px 1px 0; margin-right: 2px; }
      .coords .gap { width: 18px; text-align: center; white-space: pre; }
      .coords .first { width: 12px; text-align: left; }
      .coords .wide { width: 30px; }
      .coords .spin { width: 51px; }
      .coords .narrow { width: 48px; }
      .coords .s16 { width: 16px; }
      .status { display: flex; flex: none; height: 22px; align-items: center; gap: 3px; padding-left: 3px; font: 11px var(--compact); }
      .status p { margin: 0; flex: 1; }
      .status span { height: 18px; line-height: 16px; padding: 0 4px 0 3px; border: 1px solid; border-color: #a0a0a0 #fff #fff #a0a0a0; white-space: nowrap; }

      .win { position: absolute; background: #f0f0f0; display: flex; flex-direction: column; }
      .win header { display: flex; align-items: center; justify-content: space-between; height: 30px; flex: none; font: 12px var(--ui); padding: 0 8px; }
      .win h2 { font: inherit; margin: 0; }
      .close { border: 0; background: none; width: 12px; height: 12px; }
      .close svg { display: block; width: 12px; height: 12px; fill: none; stroke: currentColor; }
      .props { left: 700px; top: 194px; width: 521px; border: 1px solid #2b2b2b; }
      .props header { background: #fff; color: #999; }
      .props .close { color: #777; margin-right: 1px; }
      .chooser { left: 827px; top: 362px; width: 268px; border: 1px solid #0078d7; box-shadow: 0 4px 14px rgba(0, 0, 0, 0.4); }
      .chooser header { background: #0078d7; color: #fff; }
      .chooser .close { margin-right: 1px; }

      .tablist { display: flex; align-items: flex-end; padding: 9px 0 0 11px; height: 32px; }
      .tablist button { border: 1px solid #dcdcdc; border-bottom: 0; background: #f0f0f0; height: 20px; padding: 0 5px; margin-right: -1px; white-space: nowrap; }
      .tablist .cur { background: #fff; height: 23px; padding: 0 6px 3px; position: relative; margin-bottom: -1px; }
      .panel { margin: 0 11px 0 9px; border: 1px solid #dcdcdc; box-shadow: inset 0 0 0 1px #fff; padding: 15px 3px 10px 9px; }
      fieldset { margin: 0; padding: 0 9px 0 14px; border: 1px solid #dcdcdc; min-width: 0; }
      legend { padding: 0 8px 0 0; margin-left: -8px; height: 13px; }
      .check { display: flex; align-items: center; gap: 3px; height: 13px; white-space: nowrap; }
      .check input { appearance: none; width: 13px; height: 13px; border: 1px solid #333; background: #fff; position: relative; flex: none; }
      .check input:checked::after { content: ""; position: absolute; left: 3px; top: 0; width: 4px; height: 7px; border: solid #333; border-width: 0 1px 1px 0; transform: rotate(42deg); }
      .check.off { color: #838383; }
      .check.off input { border-color: #ccc; }
      .check.off input:checked::after { border-color: #aaa; }
      .lone { margin-left: 7px; }
      .key { margin-top: 15px; padding-bottom: 11px; }
      .keygrid { display: grid; grid-template-columns: 186px 1fr; align-items: start; }
      .order { display: flex; align-items: center; margin: 23px 0 13px; }
      .order label { width: 90px; }
      .order .spin { width: 59px; }
      .switchbox { margin-top: 5px; padding: 0 14px 40px; }
      .switchbox legend { margin-left: -5px; }
      .switchrow { display: flex; align-items: center; padding-top: 15px; }
      .switchrow span { width: 140px; }
      .btn { background: #e1e1e1; border: 1px solid #adadad; height: 23px; width: 73px; }
      .btn.set { width: 56px; height: 19px; }
      .btn.dots { width: 13px; height: 19px; background: #ccc; border-color: #bfbfbf; color: #838383; }
      .btn.def { border: 2px solid #0078d7; }
      .barcode { margin-top: 17px; padding: 18px 9px 20px 14px; display: flex; flex-direction: column; gap: 18px; }
      .enable { margin-top: 16px; padding: 19px 0 16px 14px; display: flex; flex-direction: column; gap: 18px; }
      .dim { color: #a0a0a0; text-shadow: 1px 1px #fff; white-space: nowrap; }
      .enable .dim { width: 87px; text-align: right; }
      .notify { margin-top: 11px; padding-bottom: 18px; }
      .nrow { display: flex; align-items: center; padding: 13px 0 15px; }
      .nrow .dim { width: 106px; }
      .combo { position: relative; display: flex; }
      .combo select { appearance: none; width: 100%; background: #e1e1e1; border: 1px solid #adadad; padding: 0 0 0 3px; height: 22px; }
      .combo svg { position: absolute; right: 4px; top: 9px; width: 9px; height: 6px; fill: none; stroke: #555; pointer-events: none; }
      .plc { width: 60px; }
      .plc select { background: #ccc; border-color: #bfbfbf; color: #838383; opacity: 1; font: 12px "Liberation Serif", serif; height: 23px; }
      .plc svg { stroke: #999; }
      .device { width: 134px; height: 21px; margin: 0 5px 0 8px; border: 1px solid #ccc; background: #f0f0f0; box-shadow: inset 0 0 0 1px #fff; color: #838383; padding: 0 4px; }
      .foot { display: flex; align-items: center; padding: 14px 8px 8px 8px; }
      .foot label { width: 34px; }
      .foot input { width: 198px; height: 25px; border: 1px solid #7a7a7a; background: #fff; padding: 0 5px 6px; }
      .foot .btn:first-of-type { margin: 0 10px 0 auto; }

      .body { padding: 9px 6px 7px 6px; display: flex; flex-direction: column; }
      .g1 { margin: 0 0 12px 2px; padding: 0 0 40px 9px; }
      .g1 legend { height: 15px; padding: 0 3px; margin-left: -4px; }
      .g1 .rows { display: grid; grid-template-columns: 96px auto; justify-content: start; align-items: center; row-gap: 9px; margin-top: -15px; }
      .target { grid-column: 2; width: 111px; margin-bottom: 4px; }
      .g2 { padding: 26px 0 28px 15px; margin-right: 2px; }
      .g2 legend { margin-left: -5px; }
      .xy { display: flex; align-items: center; white-space: nowrap; }
      .xy > .dim { width: 18px; text-align: center; }
      .xy > .lead { width: 60px; text-align: left; }
      .acts { display: flex; justify-content: flex-end; gap: 11px; margin: 13px 3px 0 0; }
      .mark { position: absolute; border: 3px solid #fe0000; height: 38px; pointer-events: none; left: 8px; }
      .m1 { top: 31px; width: 230px; }
      .m2 { top: 98px; width: 173px; }
    `,
  ];

  private menus = ["File", "Edit", "View", "Parts", "Resources", "Communications", "Soft-VT", "Tool", "Help"];

  private bar1: Item[] = ["new", "open", "save", "|", "export", "|", "cut", "copy", "paste", "|", "undo", "redo", "|", "print", ">"];
  private bar2: Item[] = ["edit", "calendar", "|", combo("page", "Page", "0  :"), "down", "up", "|", "*pickWindow", "left", "|", "*baseB", "win1", "win2", "win3", "|", "layers", ">"];
  private bar3: Item[] = [
    "zoomIn", "zoomOut", combo("zoom", "Zoom", "100%"), "grid", "|", "devices", "*allOn", "allOff", "|",
    spin("0", { name: "Display ID" }),
    combo("ident", "ID", "ID0 :", true), "windows", "searchWin", "|",
    "*screenEdit", "*screenGear", "screenFind", "abcWin", "cntWin", "screenTouch", "books", "bookGrid", ">",
  ];
  private bar4: Item[] = ["toPanel", "toPanelBlue", "fromPanel", "compare", "|", "verify", "|", "panelTool", "*usb", "network", ">"];
  private bar5: Item[] = ["selParts", "*cursor", "|", "parts123", "moveParts", "noFill", "|", "rotate", "flipH", "flipV", "shear", "|", "toFront", "forward", "backward", "toBack", "group", "ungroup", "alignLeft", "^", "textColor", ">"];
  private bar6: Item[] = ["snap", "|", "al1", "al2", "al3", "al4", "al5", "al6", ">"];
  private rail1: Item[] = ["line", "polyline", "rect", "hexagon", "ellipse", "arc", "pie", "|", "image", "frame", "|", "letterA", "note", "|", "dxf", "table1", "table2", "inlay", ">"];
  private rail2: Item[] = ["num", "abc", "list", "sound", "camera", "film", "convert", "imageFolder", "remote", "video", "|", "barMeter", "gauge", "halfGauge", "stacked", "piechart", "trend", "scatter", ">"];
  private rail3: Item[] = ["swGreen", "swRed", "lamp", "lamps", "|", "overlay", ">"];
  private tree = [["treeScreen", "Screen"], ["treeGlobal", "Global window"], ["treePrinter", "Printer form"], ["trash", "Trash"]];
  private handles = [[250, 26], [315, 26], [381, 26], [250, 61], [381, 61], [250, 97], [315, 97], [381, 97]];

  private check(text: string, checked = false, off = false, cls = "") {
    return html`<label class="check ${off ? "off" : ""} ${cls}"><input type="checkbox" ?checked=${checked} ?disabled=${off} />${text}</label>`;
  }

  private closeButton() {
    return html`<button class="close" aria-label="Close"><svg viewBox="0 0 12 12"><path d="M1 1l10 10M11 1L1 11" /></svg></button>`;
  }

  private arrow(d: string, label: string) {
    return html`<button class="bar-btn" aria-label=${label}><svg viewBox="0 0 8 8"><path d=${d} /></svg></button>`;
  }

  private renderSide() {
    return html`<aside class="side">
      <header>
        <h2>Screen</h2>
        <button class="pbtn" aria-label="Pin"><svg viewBox="0 0 9 10"><path d="M2.500 .5h4M2.500 .5v5M5.500 .5v5M6.500 .5v5M1 5.500h7M4.500 6v4" /></svg></button>
        <button class="pbtn" aria-label="Close panel"><svg viewBox="0 0 9 10"><path d="M1 1.500l7 7M8 1.500l-7 7" /></svg></button>
      </header>
      <ul class="tree">
        ${this.tree.map(([i, t], n) => html`<li class=${n ? "" : "sel"}><span class="exp"></span>${icon(i)}${t}</li>`)}
      </ul>
      <div class="quick">
        ${["edit", "calGrey", "copyGrey", "pasteGrey", "eraseGrey", "export", "replace", "layers"].map((n) => html`<button aria-label=${n}>${icon(n)}</button>`)}
      </div>
      <nav class="tabs"><button>${icon("screenGear")}System setting</button><button class="cur">${icon("screenEdit")}Screen</button></nav>
    </aside>`;
  }

  private renderCanvas() {
    return html`<section class="frame">
      <div class="view">
        <div class="sheet">
          <div class="page">
            <div class="big">ABCDE</div>
            ${this.handles.map(([x, y]) => html`<i class="h" style="left:${x}px;top:${y}px"></i>`)}
            <svg class="tabicon" viewBox="0 0 32 32">
              <rect width="32" height="32" rx="1" fill="#fff" /><rect y="29" width="32" height="3" fill="#c4c4c4" />
              <rect x="4" y="5" width="24" height="19" fill="#505050" /><rect x="4" y="19" width="24" height="5" fill="#b0b0b0" />
              <path d="M12 6l5 6h-3v5h3l-5 6-6-6h3v-5H6z" fill="#e23c33" />
              <path d="M19 16c0-3 4-3 4 0v4l6 1c2 0 3 1 3 3v8H19l-6-6c-1-2 1-3 3-2l3 1z" fill="#fdb562" />
            </svg>
            <div class="slide">Slide tab</div>
          </div>
        </div>
      </div>
      <div class="vbar">${this.arrow("M1 6l3-3 3 3", "Scroll up")}<span class="v1"></span><span class="thumb v2"></span><span class="v3"></span>${this.arrow("M1 2l3 3 3-3", "Scroll down")}</div>
      <div class="hbar">${this.arrow("M6 1L3 4l3 3", "Scroll left")}<span class="h1"></span><span class="thumb h2"></span>${this.arrow("M2 1l3 3-3 3", "Scroll right")}</div>
      <div></div>
    </section>`;
  }

  private renderProps() {
    return html`<section class="win props" role="dialog" aria-label="Text display">
      <header><h2>Text display</h2>${this.closeButton()}</header>
      <nav class="tablist"><button>Settings</button><button class="cur">Key/Barcode entry</button><button>Display control</button><button>Preview</button></nav>
      <div class="panel">
        ${this.check("Read only once when switching pages", false, false, "lone")}
        <fieldset class="key">
          <legend>${this.check("Key entry", true)}</legend>
          <div class="keygrid">
            <div>
              <div class="order"><label for="order">Key entry order</label>${spin("0", { id: "order" })}</div>
              ${this.check("Select by switch", true)}
            </div>
            <fieldset class="switchbox">
              <legend>${this.check("Select by switch and display window", true)}</legend>
              <div class="switchrow"><span>No window</span><button class="btn set">Settings...</button></div>
            </fieldset>
          </div>
          <fieldset class="barcode">
            <legend>${this.check("Barcode entry")}</legend>
            ${this.check("Auto apply", true, true)}${this.check("After auto apply", false, true)}${this.check("Barcode offset", false, true)}
          </fieldset>
        </fieldset>
        <fieldset class="enable">
          <legend>${this.check("Enable changes to")}</legend>
          <span class="dim">Enabled bit device</span><span class="dim">Mode</span>
        </fieldset>
        <fieldset class="notify">
          <legend>${this.check("Notify changes to settings")}</legend>
          <div class="nrow">
            <label class="dim" for="dev">Notified bit device</label>${combo("plc", "Device source", "PLC", true)}
            <input id="dev" class="device" type="text" value="[00]R000000" disabled />
            <button class="btn dots" disabled>...</button>
          </div>
          ${this.check("Reset notify bit before execution", false, true)}
        </fieldset>
      </div>
      <div class="foot">
        <label for="lab">Label</label><input id="lab" type="text" value="S_0000" />
        <button class="btn">OK</button><button class="btn">Cancel</button>
      </div>
    </section>`;
  }

  private renderChooser() {
    return html`<section class="win chooser" role="dialog" aria-label="Window to display">
      <header><h2>Window to display</h2>${this.closeButton()}</header>
      <div class="body">
        <fieldset class="g1">
          <legend>Window to display</legend>
          <div class="rows">
            ${combo("target", "Window to display", "Global window")}
            <label for="gid">Global window ID</label>${spin("0", { id: "gid" })}
            <label for="gno">Global window No.</label>${spin("G0000", { id: "gno" })}
          </div>
        </fieldset>
        <fieldset class="g2">
          <legend>${this.check("Specify window display position")}</legend>
          <div class="xy"><span class="lead dim">( X , Y ) = (</span>${spin("0", { name: "X", off: true })}<span class="dim">,</span>${spin("0", { name: "Y", off: true })}<span class="dim">)</span></div>
        </fieldset>
        <div class="acts"><button class="btn def">OK</button><button class="btn">Cancel</button></div>
      </div>
      <span class="mark m1"></span><span class="mark m2"></span>
    </section>`;
  }

  render() {
    return html`
      <header class="title">
        ${icon("app")}
        <h1>VT STUDIO - Untitled.vfx * - Page No.0 Base</h1>
        <button class="wbtn" aria-label="Minimize"><svg class="icon" viewBox="0 0 16 16"><path d="M3 8.500h10" /></svg></button>
        <button class="wbtn" aria-label="Restore"><svg class="icon" viewBox="0 0 16 16"><path d="M3.500 5.500h7v7h-7zM5.500 5V3.500h7v7H11" /></svg></button>
        <button class="wbtn" aria-label="Close"><svg class="icon" viewBox="0 0 16 16"><path d="M3 3l10 10M13 3L3 13" /></svg></button>
      </header>
      <nav class="menu">${this.menus.map((m) => html`<button>${m}</button>`)}</nav>
      <div class="bars"><tool-strip .items=${this.bar1}></tool-strip><tool-strip .items=${this.bar2}></tool-strip></div>
      <div class="bars"><tool-strip .items=${this.bar3}></tool-strip><tool-strip .items=${this.bar4}></tool-strip></div>
      <main class="main">
        ${this.renderSide()}${this.renderCanvas()}
        <div class="rail"><tool-strip vertical .items=${this.rail1}></tool-strip></div>
        <div class="rail"><tool-strip vertical .items=${this.rail2}></tool-strip><tool-strip vertical .items=${this.rail3}></tool-strip></div>
      </main>
      <div class="bars"><tool-strip .items=${this.bar5}></tool-strip><tool-strip .items=${this.bar6}></tool-strip></div>
      <div class="coords">
        <div>
          <span class="gap first">(</span>${spin("252", { name: "Left" })}<span class="gap">,</span>${spin("28", { name: "Top" })}
          <span class="gap wide">) - (</span>${spin("383", { name: "Right" })}<span class="gap s16">,</span>${spin("99", { name: "Bottom" })}
          <span class="gap s16">)</span>${spin("132", { name: "Width", cls: "narrow" })}<span class="gap">x</span>${spin("72", { name: "Height", cls: "narrow" })}
        </div>
      </div>
      <footer class="status"><p>Text display (252,28)-(383,99) 132x72 [S_0000]</p><span>VT5-WX15</span><span>KEYENCE KV-X500/X300 (Ethernet)</span><span>324, 68</span></footer>
      ${this.renderProps()}${this.renderChooser()}
    `;
  }
}
